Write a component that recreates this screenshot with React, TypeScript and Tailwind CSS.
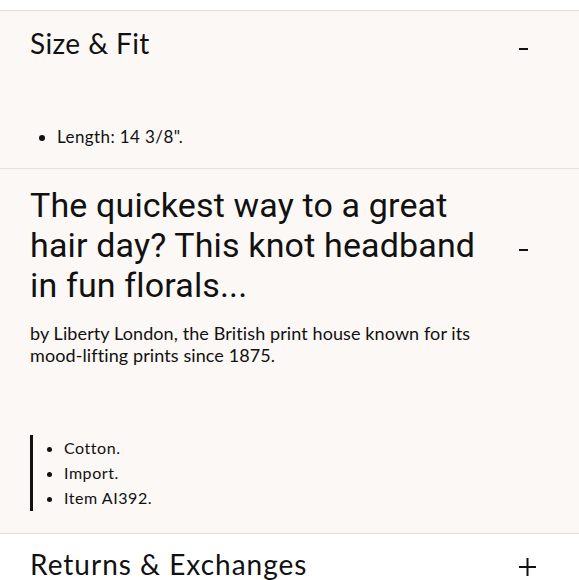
export default function App() {
  return (
    <div className="w-[579px] h-[580px] overflow-hidden bg-white text-[#111]" style={{ fontFamily: "Lato, 'Open Sans', sans-serif" }}>
      <div className="h-[10px] bg-white" />

      {/* Size & Fit */}
      <section className="border-t border-[#e3e1df] bg-[#fbf8f5] h-[158px] px-[30px] pt-[16px]">
        <div className="flex items-start justify-between">
          <h2 className="text-[28px] leading-[32px] tracking-[0.4px]">Size &amp; Fit</h2>
          <div className="mr-[21px] mt-[20.5px] h-[2.5px] w-[9px] bg-[#111]" />
        </div>
        <ul className="mt-[67px] list-disc pl-[27px] text-[17px] leading-[22px] tracking-[0.4px]">
          <li>Length: 14 3/8".</li>
        </ul>
      </section>

      {/* Description */}
      <section className="border-t border-[#e3e1df] bg-[#fbf8f5] h-[365px] px-[30px] pt-[16px]">
        <div className="flex items-start justify-between">
          <h2 className="w-[460px] text-[34px] leading-[40px] tracking-[0.15px]" style={{ fontFamily: "Roboto, sans-serif" }}>
            The quickest way to a great hair day? This knot headband in fun florals...
          </h2>
          <div className="mr-[21px] mt-[63.5px] h-[2.5px] w-[9px] bg-[#111]" />
        </div>
        <p className="mt-[17px] w-[470px] text-[18px] leading-[22px] tracking-[0.1px]">
          by Liberty London, the British print house known for its mood-lifting prints since 1875.
        </p>
        <div className="mt-[69px] border-l-[3px] border-[#111] pb-[1px]">
          <ul className="list-disc pl-[31px] text-[16px] leading-[25px] tracking-[0.55px]">
            <li>Cotton.</li>
            <li>Import.</li>
            <li>Item AI392.</li>
          </ul>
        </div>
      </section>

      {/* Returns */}
      <section className="border-t border-[#e3e1df] bg-white px-[30px] pt-[12.5px]">
        <div className="flex items-start justify-between">
          <h2 className="text-[28px] leading-[34px] tracking-[1px]">Returns &amp; Exchanges</h2>
          <svg width="17" height="18" viewBox="0 0 17 18" className="mr-[13px] mt-[11px]">
            <path d="M8.5 0v18M0 9h17" stroke="#111" strokeWidth="2" />
          </svg>
        </div>
      </section>
    </div>
  );
}
